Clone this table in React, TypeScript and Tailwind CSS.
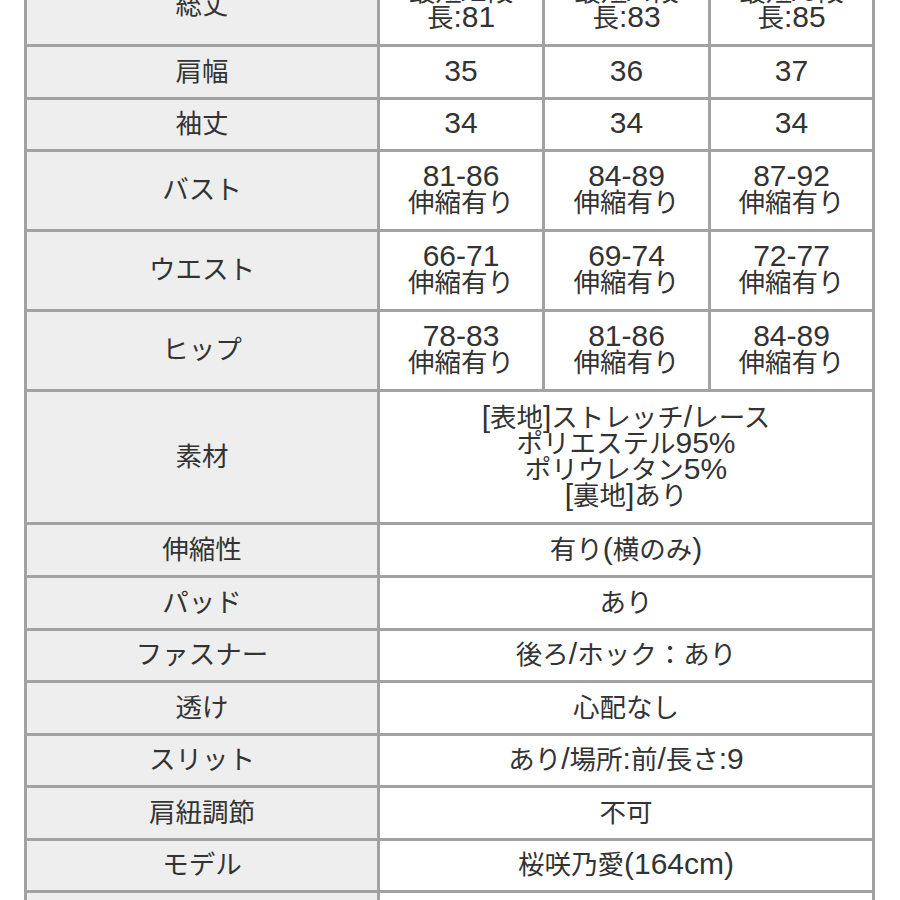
import React from 'react';

type Row = {
  label: string;
  values: string[][]; // one entry per cell, each entry is lines
  h: string;
};

const rows: Row[] = [
  { label: '総丈', values: [['最短/2段', '長:81'], ['最短/4段', '長:83'], ['最短/6段', '長:85']], h: 'h-[77px]' },
  { label: '肩幅', values: [['35'], ['36'], ['37']], h: 'h-[50px]' },
  { label: '袖丈', values: [['34'], ['34'], ['34']], h: 'h-[49px]' },
  { label: 'バスト', values: [['81-86', '伸縮有り'], ['84-89', '伸縮有り'], ['87-92', '伸縮有り']], h: 'h-[77px]' },
  { label: 'ウエスト', values: [['66-71', '伸縮有り'], ['69-74', '伸縮有り'], ['72-77', '伸縮有り']], h: 'h-[77px]' },
  { label: 'ヒップ', values: [['78-83', '伸縮有り'], ['81-86', '伸縮有り'], ['84-89', '伸縮有り']], h: 'h-[77px]' },
  {
    label: '素材',
    values: [['[表地]ストレッチ/レース', 'ポリエステル95%', 'ポリウレタン5%', '[裏地]あり']],
    h: 'h-[130px]',
  },
  { label: '伸縮性', values: [['有り(横のみ)']], h: 'h-[50px]' },
  { label: 'パッド', values: [['あり']], h: 'h-[50px]' },
  { label: 'ファスナー', values: [['後ろ/ホック：あり']], h: 'h-[49px]' },
  { label: '透け', values: [['心配なし']], h: 'h-[50px]' },
  { label: 'スリット', values: [['あり/場所:前/長さ:9']], h: 'h-[49px]' },
  { label: '肩紐調節', values: [['不可']], h: 'h-[50px]' },
  { label: 'モデル', values: [['桜咲乃愛(164cm)']], h: 'h-[49px]' },
  { label: '着用サイズ', values: [['Mサイズ']], h: 'h-[50px]' },
];

// latin runs are set a bit larger, the way the original font draws them
function Line({ text }: { text: string }) {
  const parts = text.split(/([\x20-\x7E]+)/).filter(Boolean);
  return (
    <div className="h-[26px] leading-[26px] whitespace-nowrap">
      {parts.map((p, i) =>
        /^[\x20-\x7E]+$/.test(p) ? (
          <span key={i} className="text-[30px] leading-[26px] font-['Liberation_Sans',sans-serif]">
            {p}
          </span>
        ) : (
          <span key={i}>{p}</span>
        )
      )}
    </div>
  );
}

function Cell({ lines, className }: { lines: string[]; className: string }) {
  return (
    <div className={`flex flex-col items-center justify-center text-center pb-[5px] ${className}`}>
      {lines.map((l, i) => (
        <Line key={i} text={l} />
      ))}
    </div>
  );
}

export default function App() {
  return (
    <div className="w-[900px] h-[900px] overflow-hidden bg-white">
      <div className="ml-[24px] -mt-[36px] w-[851px] grid grid-cols-[350px_162px_163px_161px] gap-[3px] p-[3px] bg-[#a2a2a2] text-[#333333] text-[26.5px] font-['Noto_Sans_CJK_JP',sans-serif]">
        {rows.map((r) => (
          <React.Fragment key={r.label}>
            <Cell lines={[r.label]} className={`bg-[#eeeeee] ${r.h}`} />
            {r.values.length === 1 ? (
              <Cell lines={r.values[0]} className={`bg-white col-span-3 ${r.h}`} />
            ) : (
              r.values.map((v, i) => <Cell key={i} lines={v} className={`bg-white ${r.h}`} />)
            )}
          </React.Fragment>
        ))}
      </div>
    </div>
  );
}
